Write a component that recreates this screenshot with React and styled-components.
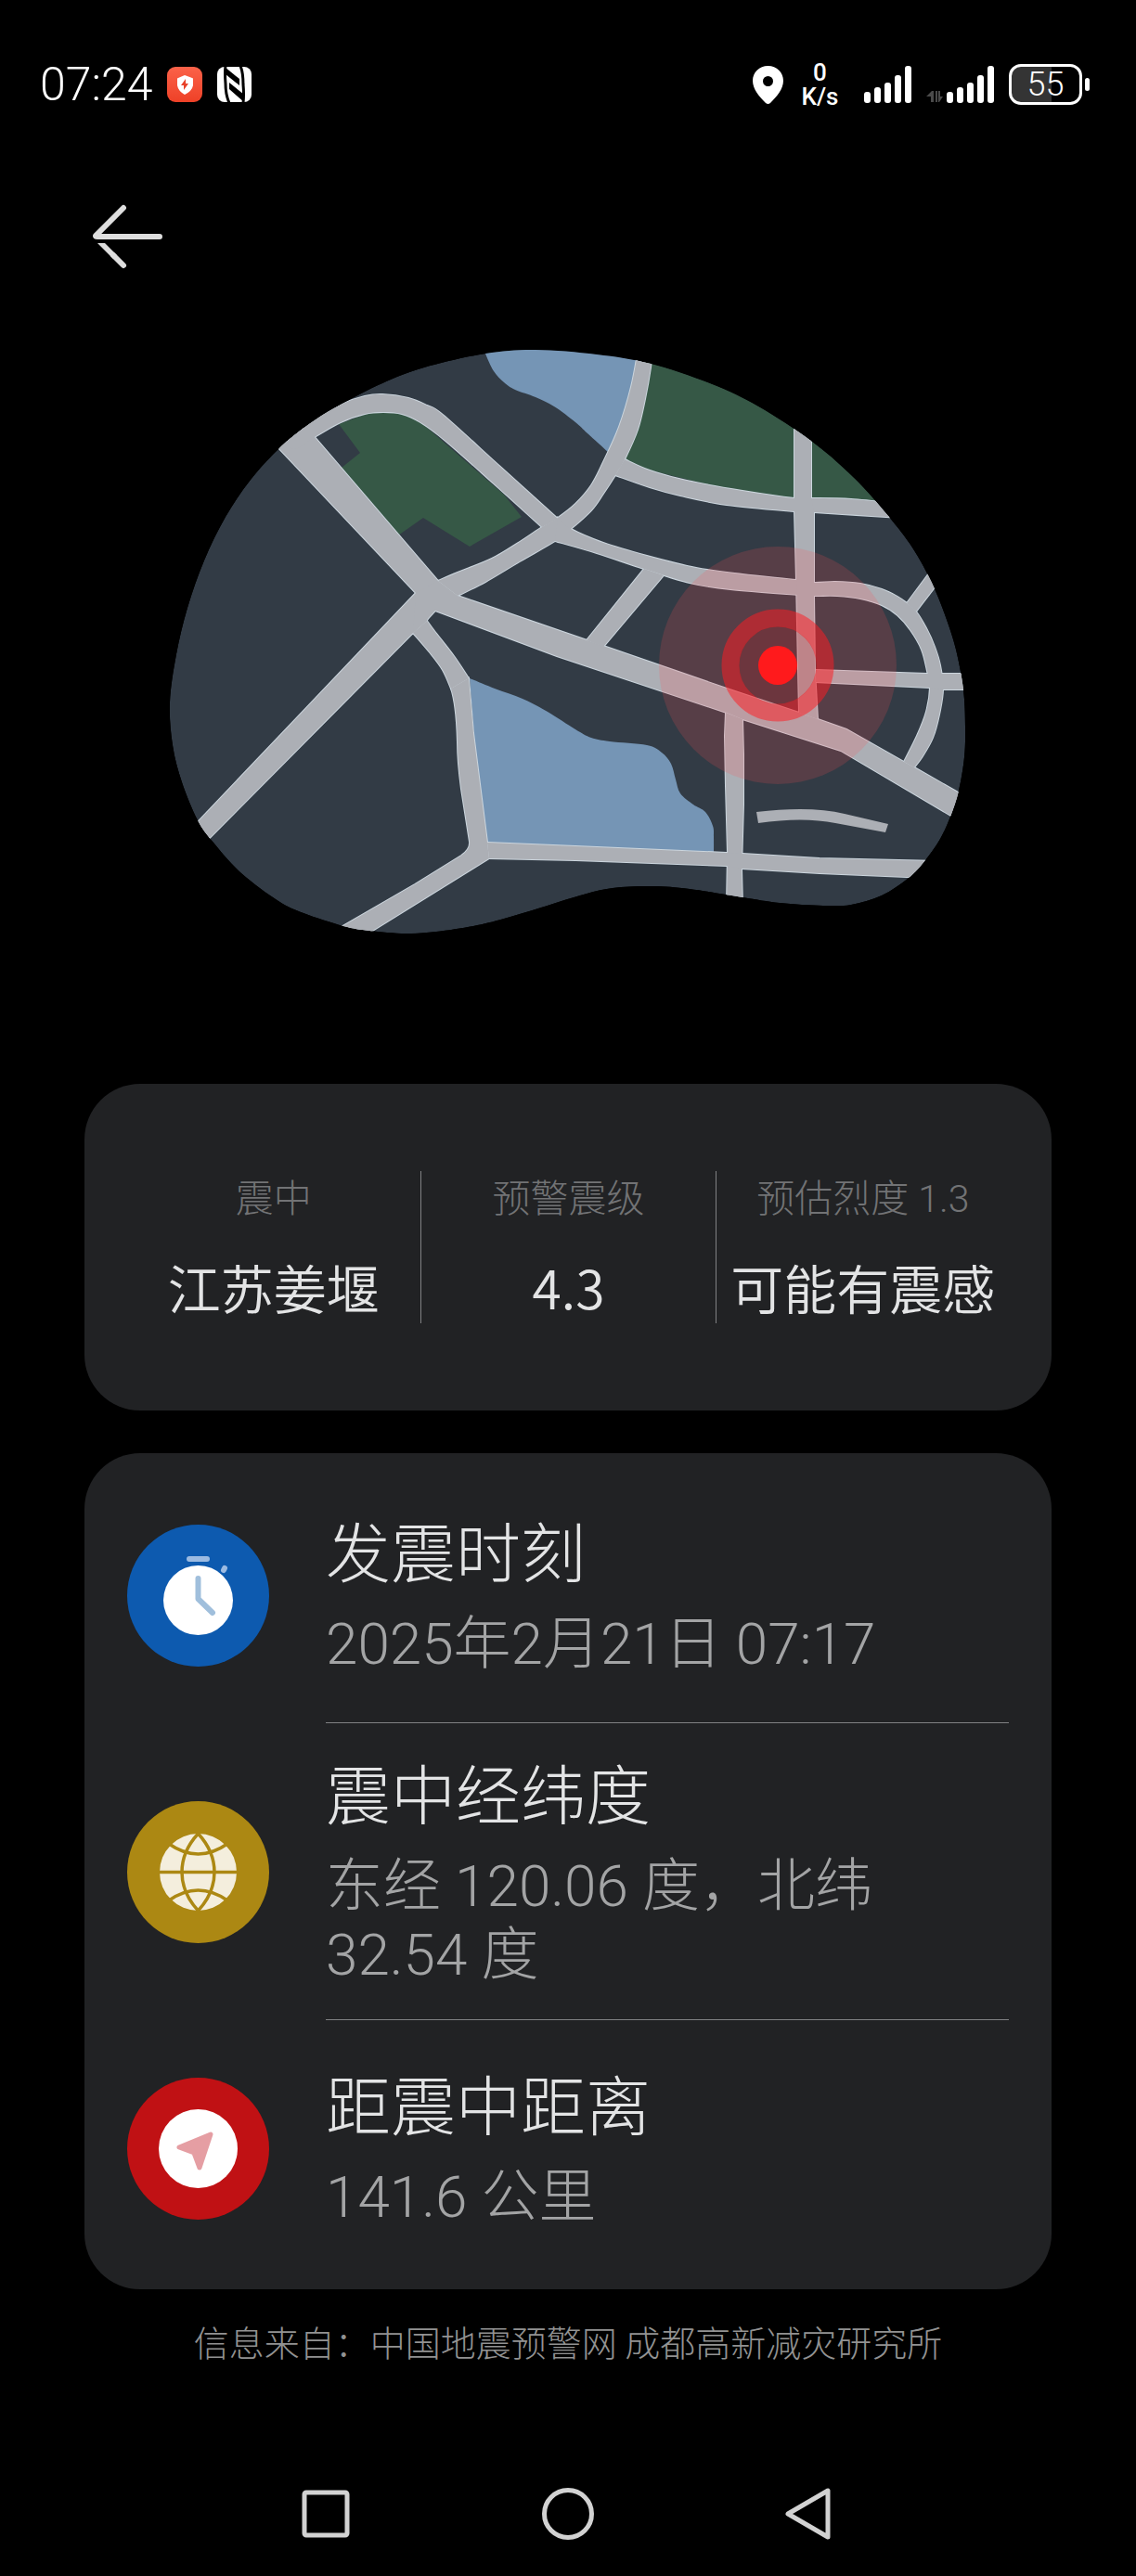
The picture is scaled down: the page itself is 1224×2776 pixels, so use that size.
import React from 'react';
import styled, { createGlobalStyle } from 'styled-components';

const GlobalStyle = createGlobalStyle`
  * { box-sizing: border-box; }
  body {
    margin: 0;
    background: #000;
    color: #e3e4e5;
    font-family: "Noto Sans CJK SC", "Noto Sans", sans-serif;
    font-weight: 300;
  }
  svg { display: block; }
`;

const numeric = 'Roboto, "Noto Sans CJK SC", sans-serif';

const Screen = styled.div`
  display: flex;
  flex-direction: column;
  background: #000;
`;

const StatusBar = styled.header`
  display: flex;
  justify-content: space-between;
  align-items: center;
  padding: 64px 50px 0 43px;
  height: 118px;
  color: #fff;
`;

const StatusGroup = styled.div`
  display: flex;
  align-items: center;
  gap: 16px;
`;

const Clock = styled.time`
  font-family: ${numeric};
  font-size: 50px;
  line-height: 54px;
`;

const Speed = styled.div`
  display: flex;
  flex-direction: column;
  align-items: center;
  width: 55px;
  padding-right: 8px;
  font-family: ${numeric};
  font-size: 26px;
  font-weight: 500;
  line-height: 26px;
`;

const Battery = styled.div`
  display: flex;
  align-items: center;
  gap: 3px;
`;

const BatteryShell = styled.div`
  width: 79px;
  height: 44px;
  border: 3px solid #fff;
  border-radius: 13px;
  background: linear-gradient(to right, #343434 ${(p) => p.$level}%, transparent ${(p) => p.$level}%);
  font-family: ${numeric};
  font-size: 36px;
  line-height: 38px;
  text-align: center;
`;

const BatteryTip = styled.div`
  width: 5px;
  height: 14px;
  border-radius: 3px;
  background: #fff;
`;

const TopBar = styled.nav`
  padding: 92px 92px 0;
`;

const IconButton = styled.button`
  display: flex;
  align-items: center;
  justify-content: center;
  width: ${(p) => p.$size}px;
  height: ${(p) => p.$size}px;
  padding: 0;
  border: 0;
  background: none;
  color: ${(p) => p.$tone};
`;

const MapArea = styled.section`
  display: flex;
  justify-content: center;
  margin-top: 72px;
`;

const MapDrawing = styled.svg`
  width: 864px;
  max-width: 100%;
  height: auto;
`;

const Main = styled.main`
  display: flex;
  flex-direction: column;
  gap: 46px;
  padding: 158px 91px 0;
`;

const Card = styled.section`
  border-radius: 60px;
  background: #212224;
`;

const SummaryCard = styled(Card)`
  display: grid;
  grid-template-columns: repeat(3, 1fr);
  padding: 94px 45px;
`;

const Stat = styled.div`
  display: flex;
  flex-direction: column;
  align-items: center;
  gap: 24px;
  white-space: nowrap;

  & + & { border-left: 1px solid #808183; }
`;

const StatLabel = styled.div`
  color: #727375;
  font-family: ${numeric};
  font-size: 41px;
  line-height: 60px;
`;

const StatValue = styled.div`
  font-size: 57px;
  font-weight: 350;
  line-height: 80px;
`;

const DetailCard = styled(Card)`
  padding: 15px 46px 14px;
`;

const DetailRow = styled.div`
  display: flex;
  gap: 61px;
`;

const Badge = styled.div`
  flex: none;
  align-self: center;
  width: 153px;
`;

const DetailText = styled.div`
  flex: 1;
  display: flex;
  flex-direction: column;
  justify-content: center;
  gap: 28px;
  min-height: ${(p) => (p.$tall ? 320 : 276)}px;
  padding-top: 4px;
  border-bottom: ${(p) => (p.$last ? '0' : '1px solid #808183')};
`;

const DetailTitle = styled.h2`
  margin: 0;
  font-size: 70px;
  font-weight: 300;
  line-height: 74px;
`;

const DetailValue = styled.p`
  margin: 0;
  color: #a3a4a5;
  font-family: ${numeric};
  font-size: 62px;
  line-height: 74px;
`;

const Source = styled.footer`
  margin-top: 30px;
  color: #929292;
  font-size: 38px;
  line-height: 52px;
  text-align: center;
`;

const SystemNav = styled.nav`
  display: grid;
  grid-template-columns: repeat(3, 1fr);
  justify-items: center;
  padding: 110px 18% 14px;
`;

/* Catmull-Rom spline through the points, as cubic segments */
function spline(points, closed) {
  const n = points.length;
  const at = (i) => (closed ? points[(i + n) % n] : points[Math.max(0, Math.min(n - 1, i))]);
  let d = `M${points[0]}`;
  const count = closed ? n : n - 1;
  for (let i = 0; i < count; i += 1) {
    const [a, b, c, e] = [at(i - 1), at(i), at(i + 1), at(i + 2)];
    const c1 = [b[0] + (c[0] - a[0]) / 6, b[1] + (c[1] - a[1]) / 6];
    const c2 = [c[0] - (e[0] - b[0]) / 6, c[1] - (e[1] - b[1]) / 6];
    d += `C${c1} ${c2} ${c}`;
  }
  return closed ? `${d}Z` : d;
}

const land = spline([
  [577, 377], [523, 381], [457, 396], [412, 413], [367, 436], [333, 457], [301, 483], [270, 517], [243, 557],
  [220, 604], [202, 655], [190, 705], [183, 757], [186, 803], [196, 843], [213, 884], [230, 908], [260, 941],
  [300, 971], [327, 984], [370, 998], [398, 1003], [437, 1006], [470, 1004], [510, 998], [543, 990],
  [583, 978], [625, 965], [660, 957], [703, 955], [743, 958], [800, 967], [840, 973], [887, 976],
  [917, 975], [950, 965], [979, 946], [997, 927], [1013, 904], [1024, 880], [1033, 852], [1039, 816],
  [1040, 783], [1038, 743], [1030, 700], [1019, 665], [1004, 628], [983, 590], [957, 556], [920, 515],
  [875, 476], [817, 438], [767, 414], [701, 392], [643, 382],
], true);

const river = `${spline([
  [521, 372], [523, 381], [532, 400], [543, 412], [555, 420], [577, 428], [597, 438], [620, 455],
  [633, 467], [655, 487],
])}L672 495L694 375Z`;

const lake = `${spline([
  [506, 731], [533, 742], [563, 753], [590, 767], [620, 786], [637, 795], [657, 799], [697, 803],
  [713, 811], [723, 823], [728, 840], [733, 855], [747, 867], [760, 875], [768, 890], [769, 902],
  [769, 925],
])}L520 915Z`;

const park = 'M365 457L388 488L368 504L420 577L429 577L456 558L506 589L562 557L543 533L473 472L450 452L412 440Z';
const forest = 'M694 375L673 500L856 545L960 550L960 375Z';

const line = (pts) => `M${pts.join('L')}`;
const band = (a, b) => `${spline(a)}L${spline(b).slice(1)}Z`;

const roads = [
  `${line([[290, 472], [448, 639], [190, 910], [215, 914], [445, 682], [460, 669], [472, 626], [339, 471], [320, 455]])}Z`,
  `${line([[448, 639], [472, 626], [493, 642], [650, 696], [783, 742], [861, 768], [881, 775], [912, 786], [974, 821],
    [985, 827], [1050, 864], [1045, 891], [906, 809], [800, 775], [783, 768], [600, 707], [469, 658], [457, 671], [445, 682]])}Z`,
  band([[301, 481], [330, 456], [367, 436], [393, 427], [412, 425], [440, 429], [460, 437], [477, 447], [539, 503], [601, 559]],
    [[584, 568], [532, 521], [480, 475], [453, 455], [433, 446], [413, 444], [393, 446], [367, 455], [339, 471], [320, 484]]),
  band([[472, 626], [493, 617], [530, 602], [560, 584], [584, 568], [601, 558], [620, 543], [637, 523], [650, 498], [667, 460], [680, 417], [688, 375]],
    [[703, 375], [701, 396], [695, 430], [687, 463], [673, 495], [663, 512], [650, 532], [637, 550], [615, 570], [598, 583], [560, 605], [523, 627], [493, 642]]),
  band([[673, 495], [700, 507], [740, 518], [800, 529], [856, 537], [874, 537], [917, 538], [970, 543]],
    [[970, 558], [877, 552], [856, 551], [783, 544], [733, 534], [700, 525], [663, 512]]),
  band([[601, 558], [615, 570], [650, 585], [697, 599], [750, 612], [800, 619], [858, 625], [877, 628], [900, 627], [927, 629],
    [950, 635], [967, 643], [977, 650], [987, 659], [998, 677], [1007, 697], [1013, 717], [1016, 743], [1012, 770], [1005, 795], [994, 815], [985, 827]],
    [[974, 821], [988, 793], [998, 767], [1002, 741], [999, 723], [993, 700], [981, 679], [967, 663], [950, 652], [927, 645],
      [902, 642], [877, 642], [860, 641], [787, 635], [743, 628], [694, 613], [643, 596], [598, 583]]),
  `${line([[977, 650], [1012, 603], [1020, 616], [987, 659]])}Z`,
  `${line([[856, 445], [856, 551], [858, 625], [861, 768], [881, 775], [878, 722], [877, 642], [877, 552], [874, 537], [874, 460]])}Z`,
  `${line([[879, 722], [999, 726], [1045, 726], [1045, 743], [1016, 743], [1002, 741], [879, 735]])}Z`,
  `${line([[694, 613], [632, 690], [650, 697], [715, 620]])}Z`,
  `${line([[782, 768], [781, 793], [782, 847], [784, 919], [783, 975], [800, 975], [799, 936], [801, 867], [801, 813], [800, 775]])}Z`,
  `${line([[525, 908], [620, 912], [783, 919], [800, 920], [883, 925], [1010, 928], [1000, 946], [883, 941], [799, 936], [783, 933], [620, 927], [527, 925]])}Z`,
  band([[460, 669], [468, 680], [489, 707], [505, 731]],
    [[486, 742], [477, 722], [463, 703], [445, 682]]),
  'M505 731L510 790L525 908L527 925L390 1010L352 1008L447 953L497 922Q507 915 506 907L497 850Q493 820 493 800Q492 760 486 742Z',
];

function EpicenterMap() {
  return (
    <MapDrawing viewBox="180 372 864 638" role="img" aria-label="震中地图">
      <clipPath id="land"><path d={land} /></clipPath>
      <g clipPath="url(#land)">
        <path d={land} fill="#323b45" />
        <path d={river} fill="#7595b5" />
        <path d={lake} fill="#7595b5" />
        <path d={park} fill="#365846" />
        <path d={forest} fill="#365846" />
        <g fill="#cbd5dd" stroke="#cbd5dd" strokeWidth="2">
          {roads.map((d) => <path key={d} d={d} />)}
        </g>
        <g fill="#acafb5">
          {roads.map((d) => <path key={d} d={d} />)}
        </g>
        <path d="M815 875Q873 868 910 877L957 888L954 897L900 887Q865 880 817 887Z" fill="#acafb5" />
      </g>
      <circle cx="838" cy="717" r="128" fill="rgba(255, 78, 82, 0.18)" />
      <circle cx="838" cy="717" r="51" fill="none" stroke="rgba(255, 28, 34, 0.52)" strokeWidth="19" />
      <circle cx="838" cy="717" r="42" fill="rgba(205, 20, 24, 0.18)" />
      <circle cx="838" cy="717" r="21" fill="#ff1a1c" />
    </MapDrawing>
  );
}

function SecurityIcon() {
  return (
    <svg width="38" height="38" viewBox="0 0 38 38">
      <defs>
        <linearGradient id="alert" x1="0" y1="0" x2="0" y2="1">
          <stop offset="0" stopColor="#fb6249" />
          <stop offset="1" stopColor="#ee4127" />
        </linearGradient>
      </defs>
      <rect width="38" height="38" rx="9" fill="url(#alert)" />
      <path d="M19 9L27 12Q28 12 28 13V20Q27 26 19 30Q12 26 11 20V13Q11 12 12 12Z" fill="#fff" />
      <path d="M20 13L15 20H18V25L23 18H20Z" fill="#e8432b" />
    </svg>
  );
}

function NfcIcon() {
  return (
    <svg width="37" height="38" viewBox="0 0 37 38">
      <rect width="37" height="38" rx="8" fill="#fff" />
      <g fill="none" stroke="#000" strokeWidth="3">
        <path d="M9 -1Q8 6 9 18Q9 30 13 39" />
        <path d="M25 -1Q28 6 28 19Q29 30 28 39" />
      </g>
      <path d="M8 0L24 13V20L9 8Z" fill="#000" />
      <path d="M13 17L29 30V38L13 24Z" fill="#000" />
    </svg>
  );
}

function PinIcon() {
  return (
    <svg width="33" height="41" viewBox="0 0 33 41">
      <path fill="#fff" fillRule="evenodd" d="M16.5 0C26 0 33 7 33 16C33 25 26 33 19 40Q16.500 42 14 40C7 33 0 25 0 16C0 7 7 0 16.500 0ZM16.500 11A5.500 5.500 0 1 0 16.500 22A5.500 5.500 0 1 0 16.500 11Z" />
    </svg>
  );
}

const barHeights = [12, 17, 22, 30, 40];

function SignalIcon({ data }) {
  const offset = data ? 22 : 0;
  return (
    <svg width={51 + offset} height="40" viewBox={`0 0 ${51 + offset} 40`}>
      {data && (
        <path d="M0 33L6 27H8V39H5V33ZM10 27H12V39H10ZM13 27H15V33H18L14 39H13Z" fill="#4a4a4a" />
      )}
      {barHeights.map((h, i) => (
        <rect key={h} x={offset + i * 11} y={40 - h} width="7" height={h} rx="3" fill="#fff" />
      ))}
    </svg>
  );
}

function TimeBadge() {
  return (
    <svg width="153" height="153" viewBox="0 0 153 153">
      <circle cx="76.5" cy="76.5" r="76.5" fill="#0d5aaf" />
      <rect x="64" y="34" width="25" height="6" rx="3" fill="#9cbbe2" />
      <path d="M104 49L105 47" stroke="#9cbbe2" strokeWidth="6" strokeLinecap="round" />
      <circle cx="76.5" cy="81.5" r="37.5" fill="#fff" />
      <path d="M76.500 58V80L92 95" fill="none" stroke="#a0bfdc" strokeWidth="6" strokeLinecap="round" strokeLinejoin="round" />
    </svg>
  );
}

function GlobeBadge() {
  return (
    <svg width="153" height="153" viewBox="0 0 153 153">
      <circle cx="76.5" cy="76.5" r="76.5" fill="#ac8813" />
      <circle cx="76.500" cy="76.5" r="41.500" fill="#f4eedd" />
      <g fill="none" stroke="#ac8813" strokeWidth="3.500">
        <path d="M34 76.500H119" />
        <path d="M76.500 35Q59 54 59 76.500Q59 99 76.500 118Q94 99 94 76.500Q94 54 76.500 35Z" />
        <path d="M45 46Q76.500 68 108 46" />
        <path d="M45 107Q76.500 85 108 107" />
      </g>
    </svg>
  );
}

function DistanceBadge() {
  return (
    <svg width="153" height="153" viewBox="0 0 153 153">
      <circle cx="76.5" cy="76.5" r="76.5" fill="#c01114" />
      <circle cx="76.5" cy="76.5" r="42.5" fill="#fff" />
      <path d="M56 75L90 61L78 97L72 81Z" fill="#e59ea3" stroke="#e59ea3" strokeWidth="5" strokeLinejoin="round" />
    </svg>
  );
}

const stats = [
  { label: '震中', value: '江苏姜堰' },
  { label: '预警震级', value: '4.3' },
  { label: '预估烈度 1.3', value: '可能有震感' },
];

const details = [
  { title: '发震时刻', value: '2025年2月21日 07:17', Icon: TimeBadge },
  { title: '震中经纬度', value: '东经 120.06 度，北纬 32.54 度', Icon: GlobeBadge, tall: true },
  { title: '距震中距离', value: '141.6 公里', Icon: DistanceBadge },
];

export default function App() {
  return (
    <Screen lang="zh-CN">
      <GlobalStyle />
      <StatusBar>
        <StatusGroup>
          <Clock>07:24</Clock>
          <SecurityIcon />
          <NfcIcon />
        </StatusGroup>
        <StatusGroup>
          <PinIcon />
          <Speed><span>0</span><span>K/s</span></Speed>
          <SignalIcon />
          <SignalIcon data />
          <Battery>
            <BatteryShell $level={59}>55</BatteryShell>
            <BatteryTip />
          </Battery>
        </StatusGroup>
      </StatusBar>

      <TopBar>
        <IconButton type="button" aria-label="返回" $size={90} $tone="#dedede">
          <svg width="90" height="90" viewBox="0 0 90 90" fill="none" stroke="currentColor" strokeWidth="6" strokeLinecap="round">
            <path d="M41 14L11 44Q11 45 13 45H80" strokeLinejoin="round" />
            <path d="M41 76L30 65" />
            <path d="M13 52H21L34 65L30 69Z" fill="currentColor" stroke="none" />
          </svg>
        </IconButton>
      </TopBar>

      <MapArea><EpicenterMap /></MapArea>

      <Main>
        <SummaryCard>
          {stats.map((s) => (
            <Stat key={s.label}>
              <StatLabel>{s.label}</StatLabel>
              <StatValue>{s.value}</StatValue>
            </Stat>
          ))}
        </SummaryCard>
        <DetailCard>
          {details.map(({ title, value, Icon, tall }, i) => (
            <DetailRow key={title}>
              <Badge><Icon /></Badge>
              <DetailText $tall={tall} $last={i === details.length - 1}>
                <DetailTitle>{title}</DetailTitle>
                <DetailValue>{value}</DetailValue>
              </DetailText>
            </DetailRow>
          ))}
        </DetailCard>
      </Main>

      <Source>信息来自：中国地震预警网 成都高新减灾研究所</Source>

      <SystemNav>
        <IconButton type="button" aria-label="最近任务" $size={100} $tone="#d2d2d2">
          <svg width="60" height="60" viewBox="0 0 60 60" fill="none" stroke="currentColor" strokeWidth="5">
            <rect x="7" y="7" width="46" height="46" rx="2" />
          </svg>
        </IconButton>
        <IconButton type="button" aria-label="主屏幕" $size={100} $tone="#d2d2d2">
          <svg width="60" height="60" viewBox="0 0 60 60" fill="none" stroke="currentColor" strokeWidth="5">
            <circle cx="30" cy="30" r="25.500" />
          </svg>
        </IconButton>
        <IconButton type="button" aria-label="后退" $size={100} $tone="#d2d2d2">
          <svg width="60" height="60" viewBox="0 0 60 60" fill="none" stroke="currentColor" strokeWidth="5" strokeLinejoin="round">
            <path d="M6 30L49 5V55Z" />
          </svg>
        </IconButton>
      </SystemNav>
    </Screen>
  );
}
